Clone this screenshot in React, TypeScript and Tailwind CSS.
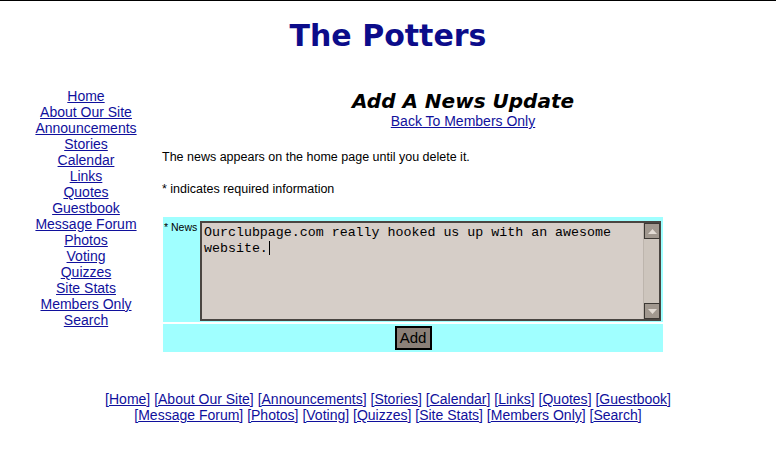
const navLinks = [
  'Home',
  'About Our Site',
  'Announcements',
  'Stories',
  'Calendar',
  'Links',
  'Quotes',
  'Guestbook',
  'Message Forum',
  'Photos',
  'Voting',
  'Quizzes',
  'Site Stats',
  'Members Only',
  'Search',
];

const footerFirst = navLinks.slice(0, 8);
const footerSecond = navLinks.slice(8);

function FooterRow({ items }: { items: string[] }) {
  return (
    <div>
      {items.map((item, i) => (
        <span key={item}>
          {i > 0 && ' '}
          [<a href="#" className="underline">{item}</a>]
        </span>
      ))}
    </div>
  );
}

function ScrollButton({ down }: { down?: boolean }) {
  return (
    <div className="flex h-[16px] w-[16px] items-center justify-center border border-[#3c3834] bg-[#a1988f]">
      <svg width="9" height="5" viewBox="0 0 9 5" className={down ? 'rotate-180' : ''}>
        <polygon points="4.5,0 9,5 0,5" fill="#e2dbd4" />
      </svg>
    </div>
  );
}

export default function App() {
  return (
    <div className="min-h-screen border-t border-black bg-white font-['Liberation_Sans',Arial,sans-serif] text-black">
      <h1 className="pt-[20px] text-center font-['DejaVu_Sans',Verdana,sans-serif] text-[30px] font-bold leading-[30px] text-[#0c0c8a]">
        The Potters
      </h1>

      <div className="mt-[36px] flex">
        <nav className="ml-[25px] flex w-[122px] flex-col items-center pt-[1px] text-[14px] leading-[16px]">
          {navLinks.map((link) => (
            <a key={link} href="#" className="text-[#10109c] underline">
              {link}
            </a>
          ))}
        </nav>

        <main className="ml-[15px] w-[602px]">
          <div className="mt-[2px] text-center">
            <h2 className="font-['DejaVu_Sans',Verdana,sans-serif] text-[20px] font-bold italic leading-[24px]">
              Add A News Update
            </h2>
            <div className="text-[14px] leading-[16px]">
              <a href="#" className="text-[#10109c] underline">
                Back To Members Only
              </a>
            </div>
          </div>

          <p className="mt-[21px] text-[12.5px] leading-[14px]">
            The news appears on the home page until you delete it.
          </p>
          <p className="mt-[18px] text-[12.5px] leading-[14px]">* indicates required information</p>

          <form className="ml-[1px] mt-[21px] w-[500px]" onSubmit={(e) => e.preventDefault()}>
            <div className="flex h-[105px] bg-[#a0ffff]">
              <div className="w-[37px] pl-[1px] pt-[4px] text-[10.5px] leading-[12px]">* News</div>
              <div className="pt-[4px]">
                <div className="flex h-[100px] w-[461px] border-2 border-[#4a4541] bg-[#d6cec8]">
                  <div className="flex-1 pl-[2px] pt-[2px] font-['Liberation_Mono','Courier_New',monospace] text-[13.3px] leading-[16px]">
                    Ourclubpage.com really hooked us up with an awesome website.
                    <span className="ml-px inline-block h-[14px] w-px bg-black align-[-3px]" />
                  </div>
                  <div className="flex w-[16px] flex-col justify-between border-l border-[#bdb5ad] bg-[#cdc5bd]">
                    <ScrollButton />
                    <ScrollButton down />
                  </div>
                </div>
              </div>
            </div>
            <div className="mt-[2px] flex h-[28px] items-center justify-center bg-[#a0ffff]">
              <button
                type="submit"
                className="h-[24px] w-[37px] border-2 border-black bg-[#8b8078] text-[15px] leading-[18px]"
              >
                Add
              </button>
            </div>
          </form>
        </main>
      </div>

      <footer className="mt-[39px] text-center text-[14px] leading-[16px] text-[#10109c]">
        <FooterRow items={footerFirst} />
        <FooterRow items={footerSecond} />
      </footer>
    </div>
  );
}
